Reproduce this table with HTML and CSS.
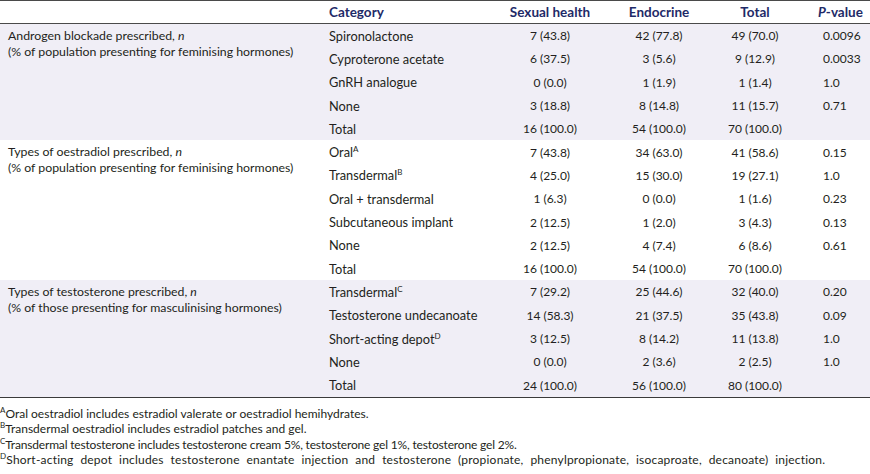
FILE: index.html
```html
<!DOCTYPE html>
<html>
<head>
<meta charset="utf-8">
<link rel="stylesheet" href="styles.css">
</head>
<body>
<table class="tbl">
  <colgroup>
    <col class="c-group">
    <col class="c-cat">
    <col class="c-sh">
    <col class="c-endo">
    <col class="c-tot">
    <col class="c-p">
  </colgroup>
  <thead>
    <tr>
      <th></th>
      <th class="left">Category</th>
      <th>Sexual health</th>
      <th>Endocrine</th>
      <th>Total</th>
      <th class="pv"><i>P</i>-value</th>
    </tr>
  </thead>
  <tbody class="shade">
    <tr>
      <td class="grp" rowspan="5">Androgen blockade prescribed, <i>n</i><br>(% of population presenting for feminising hormones)</td>
      <td class="cat">Spironolactone</td><td>7 (43.8)</td><td>42 (77.8)</td><td>49 (70.0)</td><td class="p">0.0096</td>
    </tr>
    <tr><td class="cat">Cyproterone acetate</td><td>6 (37.5)</td><td>3 (5.6)</td><td>9 (12.9)</td><td class="p">0.0033</td></tr>
    <tr><td class="cat">GnRH analogue</td><td>0 (0.0)</td><td>1 (1.9)</td><td>1 (1.4)</td><td class="p">1.0</td></tr>
    <tr><td class="cat">None</td><td>3 (18.8)</td><td>8 (14.8)</td><td>11 (15.7)</td><td class="p">0.71</td></tr>
    <tr><td class="cat">Total</td><td>16 (100.0)</td><td>54 (100.0)</td><td>70 (100.0)</td><td class="p"></td></tr>
  </tbody>
  <tbody>
    <tr>
      <td class="grp" rowspan="6">Types of oestradiol prescribed, <i>n</i><br>(% of population presenting for feminising hormones)</td>
      <td class="cat">Oral<sup>A</sup></td><td>7 (43.8)</td><td>34 (63.0)</td><td>41 (58.6)</td><td class="p">0.15</td>
    </tr>
    <tr><td class="cat">Transdermal<sup>B</sup></td><td>4 (25.0)</td><td>15 (30.0)</td><td>19 (27.1)</td><td class="p">1.0</td></tr>
    <tr><td class="cat">Oral + transdermal</td><td>1 (6.3)</td><td>0 (0.0)</td><td>1 (1.6)</td><td class="p">0.23</td></tr>
    <tr><td class="cat">Subcutaneous implant</td><td>2 (12.5)</td><td>1 (2.0)</td><td>3 (4.3)</td><td class="p">0.13</td></tr>
    <tr><td class="cat">None</td><td>2 (12.5)</td><td>4 (7.4)</td><td>6 (8.6)</td><td class="p">0.61</td></tr>
    <tr><td class="cat">Total</td><td>16 (100.0)</td><td>54 (100.0)</td><td>70 (100.0)</td><td class="p"></td></tr>
  </tbody>
  <tbody class="shade last">
    <tr>
      <td class="grp" rowspan="5">Types of testosterone prescribed, <i>n</i><br>(% of those presenting for masculinising hormones)</td>
      <td class="cat">Transdermal<sup>C</sup></td><td>7 (29.2)</td><td>25 (44.6)</td><td>32 (40.0)</td><td class="p">0.20</td>
    </tr>
    <tr><td class="cat">Testosterone undecanoate</td><td>14 (58.3)</td><td>21 (37.5)</td><td>35 (43.8)</td><td class="p">0.09</td></tr>
    <tr><td class="cat">Short-acting depot<sup>D</sup></td><td>3 (12.5)</td><td>8 (14.2)</td><td>11 (13.8)</td><td class="p">1.0</td></tr>
    <tr><td class="cat">None</td><td>0 (0.0)</td><td>2 (3.6)</td><td>2 (2.5)</td><td class="p">1.0</td></tr>
    <tr><td class="cat">Total</td><td>24 (100.0)</td><td>56 (100.0)</td><td>80 (100.0)</td><td class="p"></td></tr>
  </tbody>
</table>
<div class="notes">
  <p><sup>A</sup>Oral oestradiol includes estradiol valerate or oestradiol hemihydrates.</p>
  <p><sup>B</sup>Transdermal oestradiol includes estradiol patches and gel.</p>
  <p class="narrow"><sup>C</sup>Transdermal testosterone includes testosterone cream 5%, testosterone gel 1%, testosterone gel 2%.</p>
  <p class="wide"><sup>D</sup>Short-acting depot includes testosterone enantate injection and testosterone (propionate, phenylpropionate, isocaproate, decanoate) injection.</p>
</div>
</body>
</html>
```

FILE: styles.css
```css
html, body {
  margin: 0;
  padding: 0;
  background: #ffffff;
}
body {
  font-family: "Lato", "Liberation Sans", sans-serif;
  font-size: 12px;
  color: #231f20;
  width: 870px;
}
.tbl {
  width: 870px;
  border-collapse: collapse;
  table-layout: fixed;
  border-top: 1px solid #4a4a4a;
  border-bottom: 1px solid #3a3a3a;
}
.c-group { width: 321px; }
.c-cat { width: 180px; }
.c-sh { width: 98px; }
.c-endo { width: 120px; }
.c-tot { width: 72px; }
.c-p { width: 79px; }
th {
  height: 22px;
  padding: 0;
  font-size: 13.5px;
  font-weight: 700;
  color: #1e2a68;
  text-align: center;
  border-bottom: 1px solid #4a4a4a;
  white-space: nowrap;
}
th.left { text-align: left; padding-left: 8px; }
th.pv { text-align: left; padding-left: 27px; }
td {
  height: 23.3px;
  padding: 0;
  text-align: center;
  white-space: nowrap;
  vertical-align: middle;
}
td.grp {
  text-align: left;
  vertical-align: top;
  padding: 4px 0 0 8px;
  line-height: 16px;
  font-size: 12.3px;
  white-space: normal;
}
td.cat {
  text-align: left;
  padding-left: 8px;
  font-size: 12.8px;
}
td.p { text-align: left; padding-left: 32px; }
.shade td { background: #f0eef6; }
sup {
  font-size: 8px;
  line-height: 0;
  vertical-align: 5px;
}
.notes {
  padding-top: 8px;
}
.notes p {
  margin: 0;
  line-height: 15.5px;
  font-size: 12px;
}
.notes p.narrow {
  letter-spacing: -0.17px;
}
.notes p.wide {
  word-spacing: 3.6px;
  letter-spacing: 0.2px;
}
.notes sup {
  font-size: 8px;
}
```
